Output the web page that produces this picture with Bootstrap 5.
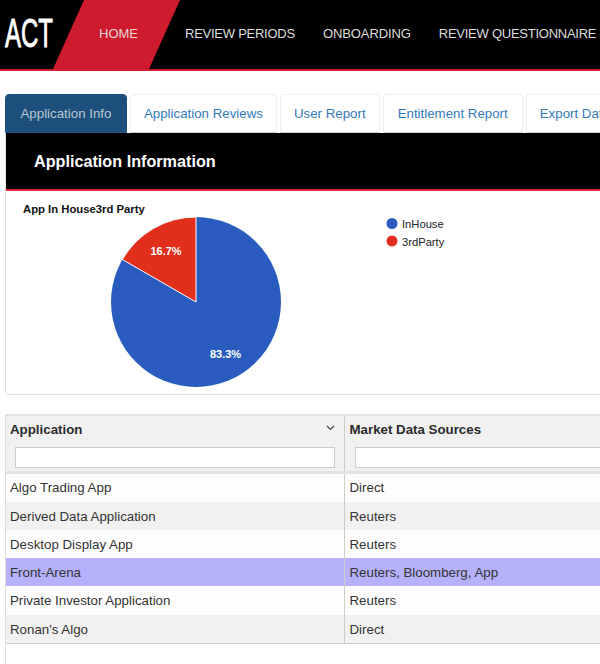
<!DOCTYPE html>
<html lang="en"><head><meta charset="utf-8"><title>ACT</title>
<link href="https://cdn.jsdelivr.net/npm/bootstrap@5.3.0/dist/css/bootstrap.min.css" rel="stylesheet">
<style>
html,body{height:664px;overflow:hidden}
body{font-family:"Liberation Sans",Arial,sans-serif;font-size:13.3px;color:#333;background:#fff;width:600px}
.topbar{height:71px;background:#000;border-bottom:2px solid #d0202f;padding:0;flex-wrap:nowrap;justify-content:flex-start;overflow:hidden}
.logo-act{width:53px;flex:none;height:69px;padding-left:5px}
.logo-act span{display:block;width:48px;font-size:40px;line-height:66px;color:#fff;font-weight:400;transform:scaleX(.6);transform-origin:left center;white-space:nowrap;-webkit-text-stroke:.9px #fff}
.home-link{width:127px;height:69px;line-height:68px;text-align:center;color:#e6d5d7;background:#ce1b2e;clip-path:polygon(31px 0,100% 0,96px 100%,0 100%);flex:none;font-size:13px;text-decoration:none;padding-left:4px}
.menu-link{color:#ddd;font-size:13px;text-decoration:none;white-space:nowrap;flex:none;line-height:68px;letter-spacing:-.25px}
.menu-link:nth-child(2){letter-spacing:-.1px}
.menu-wrap{gap:28px;padding-left:5px;flex-wrap:nowrap}
.tabs-row{margin:23px 0 0 5px;gap:3px;flex-wrap:nowrap;border:0;height:39px}
.tabs-row .nav-link{height:39px;line-height:37px;padding:0 13px;font-size:13.3px;color:#337ab7;border:1px solid #eee;border-bottom:1px solid #ccc;border-radius:4px 4px 0 0;white-space:nowrap;margin:0;background:#fff}
.tabs-row .nav-link.active{background:#1d4f7c;color:#b9c6d3;border-color:#1d4f7c;padding:0 14.5px}
.tabs-row .nav-item:nth-child(4) .nav-link{padding:0 14px}
.panel-box{margin-left:5px;width:640px;height:262px;border:1px solid #ddd;border-top:0;border-radius:0 0 4px 4px}
.panel-head{height:58px;background:#000;border-bottom:2px solid #e0283c;color:#fff;font-size:16.2px;font-weight:700;padding-left:28px;line-height:57px}
.chart-zone{height:204px}
.table-wrap{margin:19px 0 0 5px;width:640px;height:250px;border-left:1px solid #ddd}
.data-grid{width:100%;table-layout:fixed;margin:0;border-collapse:collapse;font-size:13.3px;color:#333}
.data-grid th{background:#f1f1f1;height:57px;padding:4px 4px 0;font-weight:700;font-size:13.3px;vertical-align:top;border-top:2px solid #e2e2e2;border-bottom:3px solid #e2e2e2;border-right:1px solid #ccc;position:relative;color:#2b2b2b}
.data-grid td{height:28px;padding:1px 4px 0;line-height:27px;border-width:0 1px 0 0;border-style:solid;border-color:#ccc;background:#fdfdfd}
.data-grid th:nth-child(2),.data-grid td:nth-child(2){padding-left:5px}
.data-grid tbody tr:nth-child(1) td{padding-top:0;line-height:28px}
.data-grid tbody tr:nth-child(5) td{height:29px;line-height:28px}
.data-grid tr.alt-row td{background:#f1f1f1}
.data-grid tr.sel-row td{background:#b5b1fb}
.data-grid tbody tr:last-child td{border-bottom:1px solid #ccc}
.filter-box{display:block;width:320px;height:21px;margin:7px 0 0 5px;border:1px solid #ccc;background:#fff;padding:0;border-radius:0}
.sort-ico{position:absolute;right:9px;top:9px}
</style></head>
<body>
<nav class="navbar topbar d-flex align-items-start">
  <div class="logo-act"><span>ACT</span></div>
  <a class="home-link" href="#">HOME</a>
  <div class="d-flex menu-wrap">
    <a class="menu-link" href="#">REVIEW PERIODS</a>
    <a class="menu-link" href="#">ONBOARDING</a>
    <a class="menu-link" href="#">REVIEW QUESTIONNAIRE</a>
  </div>
</nav>
<ul class="nav nav-tabs tabs-row">
  <li class="nav-item"><a class="nav-link active" href="#">Application Info</a></li>
  <li class="nav-item"><a class="nav-link" href="#">Application Reviews</a></li>
  <li class="nav-item"><a class="nav-link" href="#">User Report</a></li>
  <li class="nav-item"><a class="nav-link" href="#">Entitlement Report</a></li>
  <li class="nav-item"><a class="nav-link" href="#">Export Data</a></li>
</ul>
<div class="panel-box">
  <div class="panel-head">Application Information</div>
  <div class="chart-zone">
    <svg width="598" height="204" viewBox="0 0 598 204" font-family="Liberation Sans, Arial, sans-serif">
      <g transform="translate(-6,-191)">
        <text x="23" y="213" font-size="11.300" font-weight="700" fill="#111">App In House3rd Party</text>
        <circle cx="196" cy="302" r="85" fill="#2a5cc0"/>
        <path d="M196 302 L122.4 259.5 A85 85 0 0 1 196 217 Z" fill="#e12f1b" stroke="#fff" stroke-width="1"/>
        <text x="166" y="255" font-size="11" font-weight="700" fill="#fff" text-anchor="middle">16.7%</text>
        <text x="225.500" y="358" font-size="11" font-weight="700" fill="#fff" text-anchor="middle">83.3%</text>
        <circle cx="392" cy="223.500" r="5.500" fill="#2a5cc0"/>
        <text x="402" y="228" font-size="11.200" fill="#222">InHouse</text>
        <circle cx="392" cy="241" r="5.500" fill="#e12f1b"/>
        <text x="402" y="246" font-size="11.200" fill="#222">3rdParty</text>
      </g>
    </svg>
  </div>
</div>
<div class="table-wrap">
  <table class="table data-grid">
    <colgroup><col style="width:338px"><col></colgroup>
    <thead><tr>
      <th>Application
        <svg class="sort-ico" width="9" height="6" viewBox="0 0 9 6"><path d="M1 1 L4.500 4.500 L8 1" fill="none" stroke="#444" stroke-width="1.200"/></svg>
        <input class="filter-box" type="text" aria-label="Filter application"></th>
      <th>Market Data Sources
        <input class="filter-box" type="text" aria-label="Filter sources"></th>
    </tr></thead>
    <tbody>
      <tr><td>Algo Trading App</td><td>Direct</td></tr>
      <tr class="alt-row"><td>Derived Data Application</td><td>Reuters</td></tr>
      <tr><td>Desktop Display App</td><td>Reuters</td></tr>
      <tr class="sel-row"><td>Front-Arena</td><td>Reuters, Bloomberg, App</td></tr>
      <tr><td>Private Investor Application</td><td>Reuters</td></tr>
      <tr class="alt-row"><td>Ronan's Algo</td><td>Direct</td></tr>
    </tbody>
  </table>
</div>
<script src="https://cdn.jsdelivr.net/npm/bootstrap@5.3.0/dist/js/bootstrap.bundle.min.js"></script>
</body></html>
